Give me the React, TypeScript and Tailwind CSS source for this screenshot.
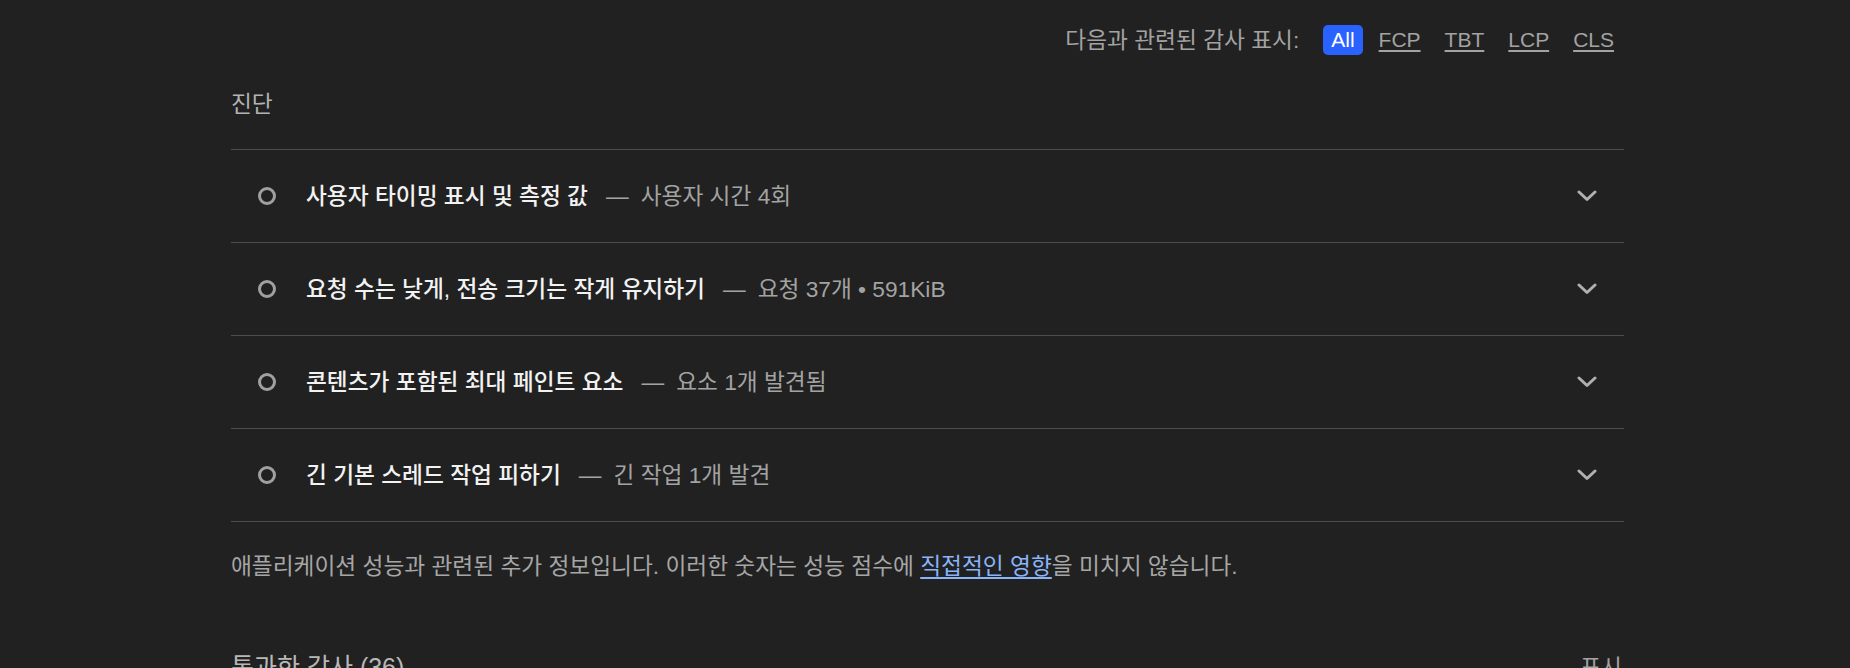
import React from "react";

const FONT = {
  fontFamily:
    '"Liberation Sans", "Noto Sans CJK KR", "Noto Sans", sans-serif',
};

interface Diagnostic {
  title: string;
  detail: string;
}

const DIAGNOSTICS: Diagnostic[] = [
  { title: "사용자 타이밍 표시 및 측정 값", detail: "사용자 시간 4회" },
  {
    title: "요청 수는 낮게, 전송 크기는 작게 유지하기",
    detail: "요청 37개 • 591KiB",
  },
  { title: "콘텐츠가 포함된 최대 페인트 요소", detail: "요소 1개 발견됨" },
  { title: "긴 기본 스레드 작업 피하기", detail: "긴 작업 1개 발견" },
];

const FILTERS = ["All", "FCP", "TBT", "LCP", "CLS"];

const Chevron = () => (
  <svg width="20" height="12" viewBox="0 0 20 12" fill="none">
    <polyline
      points="2,2 10,9.5 18,2"
      stroke="#b0b0b0"
      strokeWidth="3"
      strokeLinecap="round"
      strokeLinejoin="round"
    />
  </svg>
);

export default function App() {
  return (
    <div
      className="w-[1850px] h-[668px] overflow-hidden bg-[#212121] text-[22.7px]"
      style={FONT}
    >
      <div className="ml-[231px] w-[1393px]">
        {/* 필터 */}
        <div className="h-[80px] flex items-center justify-end">
          <span className="text-[#a3a3a3] mr-[24px]">다음과 관련된 감사 표시:</span>
          <div className="flex gap-[8px] mr-[2px] text-[21px]">
            {FILTERS.map((f, i) => (
              <button
                key={f}
                className={
                  i === 0
                    ? "h-[30px] px-[8px] rounded-[5px] bg-[#2962ff] text-white leading-[30px]"
                    : "h-[30px] px-[8px] text-[#a3a3a3] underline underline-offset-[3px] leading-[30px]"
                }
              >
                {f}
              </button>
            ))}
          </div>
        </div>

        {/* 진단 */}
        <div className="mt-[9px] mb-[30px] leading-[30px] text-[#b3b3b3]">진단</div>

        <div className="border-b border-[#4d4d4d]">
          {DIAGNOSTICS.map((d) => (
            <div
              key={d.title}
              className="h-[93px] border-t border-[#4d4d4d] flex items-center pl-[27px] pr-[27px]"
            >
              <div className="w-[18px] h-[18px] rounded-full border-[3px] border-[#a0a0a0] shrink-0"></div>
              <span className="ml-[30px] text-[#f2f2f2] font-medium">{d.title}</span>
              <span className="ml-[18px] text-[#a3a3a3]">—</span>
              <span className="ml-[12px] text-[#a3a3a3]">{d.detail}</span>
              <div className="ml-auto flex items-center">
                <Chevron />
              </div>
            </div>
          ))}
        </div>

        <p className="mt-[29px] leading-[30px] text-[#a6a6a6]">
          애플리케이션 성능과 관련된 추가 정보입니다. 이러한 숫자는 성능 점수에{" "}
          <a className="text-[#8ab4f8] underline underline-offset-[3px]">직접적인 영향</a>을
          미치지 않습니다.
        </p>

        <div className="mt-[71px] flex justify-between leading-[30px]">
          <span className="text-[#b8b8b8] text-[25px]">통과한 감사 (36)</span>
          <span className="text-[#a3a3a3] mr-[2px]">표시</span>
        </div>
      </div>
    </div>
  );
}
